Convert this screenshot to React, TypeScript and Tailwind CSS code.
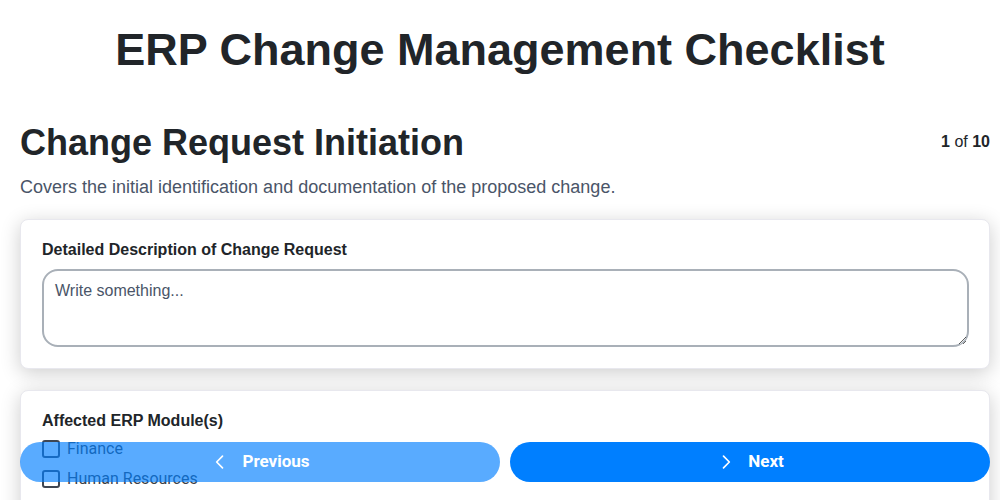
import React from "react";

function ChevronLeft() {
  return (
    <svg width="20" height="20" viewBox="0 0 24 24" fill="none" stroke="currentColor" strokeWidth="2" strokeLinecap="round" strokeLinejoin="round">
      <path d="M15 19l-7-7 7-7" />
    </svg>
  );
}
function ChevronRight() {
  return (
    <svg width="20" height="20" viewBox="0 0 24 24" fill="none" stroke="currentColor" strokeWidth="2" strokeLinecap="round" strokeLinejoin="round">
      <path d="M9 19l7-7-7-7" />
    </svg>
  );
}

const modules = ["Finance", "Human Resources", "Supply Chain", "Manufacturing"];

export default function App() {
  return (
    <div className="min-h-screen bg-white text-[#222529] font-['Liberation_Sans',Arial,sans-serif]">
      <h1 className="pt-[24px] text-center text-[45px] font-bold leading-[52px] text-[#212529]">
        ERP Change Management Checklist
      </h1>
      <div className="pl-5 pr-[10px] pb-28">
        <div className="mt-[45px] flex items-start justify-between">
          <h2 className="text-[36px] font-bold leading-[44px] text-[#212529]">Change Request Initiation</h2>
          <div className="pt-[9px] text-[16px] text-[#212529]">
            <span className="font-bold">1</span> of <span className="font-bold">10</span>
          </div>
        </div>
        <p className="mt-[9px] text-[18px] leading-[26px] text-[#4a5568]">
          Covers the initial identification and documentation of the proposed change.
        </p>
        <div className="mt-[19px] flex flex-col gap-[21px]">
          <div className="rounded-lg border border-[#e8e8ee] bg-white pl-[21px] pr-5 pt-[20px] pb-[21px] shadow-[0_4px_20px_rgba(0,0,0,0.2)]">
            <div className="text-[16px] font-bold leading-[20px] text-[#212529]">Detailed Description of Change Request</div>
            <textarea
              placeholder="Write something..."
              className="mt-[9px] block h-[78px] w-full resize-y rounded-[16px] border-2 border-[#a9b0b8] px-[11px] py-[8px] text-[16px] text-[#212529] placeholder:text-[#4a5568] outline-none font-['Liberation_Sans',Arial,sans-serif]"
            />
          </div>
          <div className="rounded-lg border border-[#e8e8ee] bg-white pl-[21px] pr-5 pt-[20px] pb-[21px] shadow-[0_4px_20px_rgba(0,0,0,0.2)]">
            <div className="text-[16px] font-bold leading-[20px] text-[#212529]">Affected ERP Module(s)</div>
            <div className="mt-[9px] flex flex-col gap-[12px]">
              {modules.map((m) => (
                <label key={m} className="flex h-[18px] items-center gap-[7px] text-[16px] leading-[18px] text-[#3a3f47] font-['Roboto',sans-serif]">
                  <span className="inline-block h-[18px] w-[18px] rounded-[3px] border-2 border-[#3f4652] bg-white" />
                  {m}
                </label>
              ))}
            </div>
          </div>
        </div>
      </div>
      <div className="fixed bottom-[18px] left-5 right-[10px] flex gap-[10px] font-['Roboto',sans-serif]">
        <button className="flex h-[40px] flex-1 items-center justify-center gap-[12px] rounded-full bg-[#007fff] text-[17px] font-bold text-white opacity-65">
          <ChevronLeft />
          Previous
        </button>
        <button className="flex h-[40px] flex-1 items-center justify-center gap-[12px] rounded-full bg-[#007fff] text-[17px] font-bold text-white">
          <ChevronRight />
          Next
        </button>
      </div>
    </div>
  );
}
